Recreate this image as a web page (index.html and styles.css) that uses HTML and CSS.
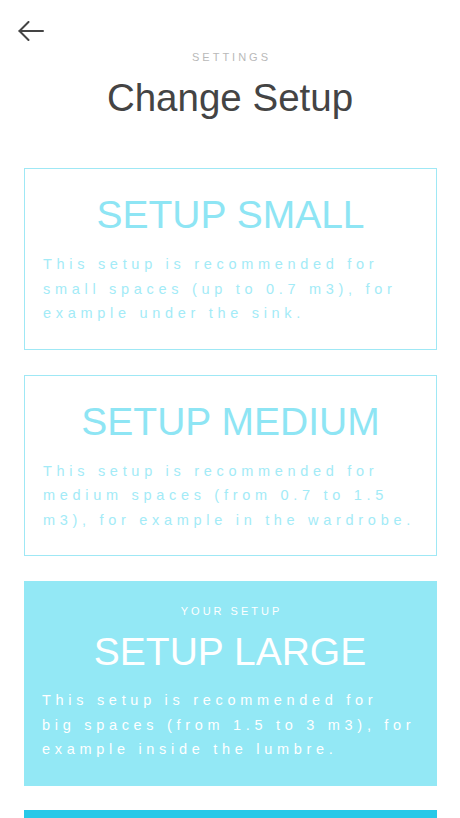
FILE: index.html
```html
<!DOCTYPE html>
<html lang="en">
<head>
<meta charset="utf-8">
<title>Change Setup</title>
<link rel="stylesheet" href="styles.css">
</head>
<body>
<div class="screen">
  <header class="topbar">
    <button class="back" aria-label="Back">
      <svg width="26" height="20" viewBox="0 0 26 20" fill="none" stroke="#444" stroke-width="2" stroke-linecap="round" stroke-linejoin="round">
        <path d="M25 10H1.5"/>
        <path d="M10.5 1L1.5 10L10.5 19"/>
      </svg>
    </button>
  </header>
  <div class="eyebrow">SETTINGS</div>
  <h1 class="title">Change Setup</h1>

  <div class="list">
    <div class="card">
      <div class="card-title">SETUP SMALL</div>
      <p class="card-text">This setup is recommended for<br>small spaces (up to 0.7 m3), for<br>example under the sink.</p>
    </div>
    <div class="card">
      <div class="card-title">SETUP MEDIUM</div>
      <p class="card-text">This setup is recommended for<br>medium spaces (from 0.7 to 1.5<br>m3), for example in the wardrobe.</p>
    </div>
    <div class="card card-active">
      <div class="card-label">YOUR SETUP</div>
      <div class="card-title">SETUP LARGE</div>
      <p class="card-text">This setup is recommended for<br>big spaces (from 1.5 to 3 m3), for<br>example inside the lumbre.</p>
    </div>
    <div class="action"></div>
  </div>
</div>
</body>
</html>
```

FILE: styles.css
```css
html, body {
  margin: 0;
  padding: 0;
  background: #ffffff;
}

body {
  font-family: "Liberation Sans", Arial, sans-serif;
  overflow: hidden;
  height: 818px;
}

.screen {
  width: 460px;
}

.topbar {
  padding: 21px 0 0 18px;
  height: 20px;
}

.back {
  display: block;
  padding: 0;
  margin: 0;
  border: 0;
  background: none;
  width: 26px;
  height: 20px;
  cursor: pointer;
}

.back svg {
  display: block;
}

.eyebrow {
  margin-top: 8px;
  text-align: center;
  font-size: 11px;
  line-height: 16px;
  letter-spacing: 3px;
  padding-left: 3px;
  color: #b9b9b9;
}

.title {
  margin: 10px 0 0;
  text-align: center;
  font-weight: normal;
  font-size: 38.5px;
  line-height: 46px;
  color: #444444;
}

.list {
  margin: 47px 23px 0 24px;
  display: flex;
  flex-direction: column;
  gap: 25px;
}

.card {
  border: 1px solid #9fe8f5;
  padding: 23px 8px 23px 18px;
  background: #ffffff;
}

.card-title {
  text-align: center;
  font-size: 39px;
  line-height: 46px;
  color: #8ee5f4;
  padding-right: 10px;
}

.card-text {
  margin: 14px 0 0;
  font-size: 14.5px;
  line-height: 24.5px;
  letter-spacing: 4.7px;
  color: #a3ebf7;
  white-space: nowrap;
}

.card-active {
  background: #93e8f5;
  border-color: #93e8f5;
  padding-top: 21px;
  padding-left: 17px;
}

.card-active .card-label {
  text-align: center;
  font-size: 11px;
  line-height: 16px;
  letter-spacing: 3px;
  color: #ffffff;
  padding-right: 7px;
}

.card-active .card-title {
  margin-top: 10px;
  color: #ffffff;
}

.card-active .card-text {
  margin-top: 13px;
  color: #ffffff;
}

.action {
  margin-top: -1px;
  height: 60px;
  background: #27c9e8;
}
```
